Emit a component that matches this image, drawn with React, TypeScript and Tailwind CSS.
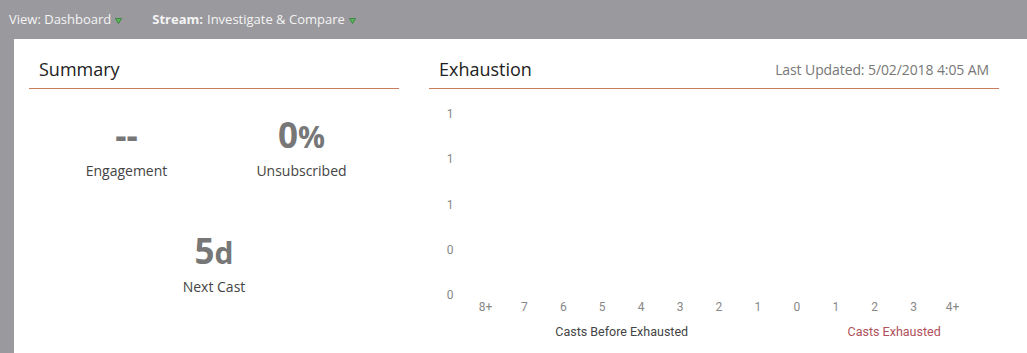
const xLabels = ["8+", "7", "6", "5", "4", "3", "2", "1", "0", "1", "2", "3", "4+"];
const yLabels = ["1", "1", "1", "0", "0"];

function Caret() {
  return (
    <svg width="7" height="6" viewBox="0 0 7 6" className="ml-[4px] mt-[2px]">
      <path d="M0.5 0.5 L6.5 0.5 L3.5 5.5 Z" fill="#5cb85c" stroke="#2f7d32" strokeWidth="0.8" />
    </svg>
  );
}

function Stat({ value, unit, label }: { value: string; unit?: string; label: string }) {
  return (
    <div className="flex flex-col items-center">
      <div className="h-[40px] leading-[40px] text-[35px] font-bold text-[#777777]">
        {value}
        {unit && <span className="text-[30px]">{unit}</span>}
      </div>
      <div className="mt-[6px] text-[14px] leading-5 text-[#444444]">{label}</div>
    </div>
  );
}

export default function App() {
  return (
    <div className="w-[1027px] h-[353px] overflow-hidden bg-[#9a999e] font-['Open_Sans',sans-serif]">
      {/* Top bar */}
      <div className="h-[39px] flex items-center pl-[9px] text-[13px] text-[#f4f4f4]">
        <div className="flex items-center">
          <span>View: Dashboard</span>
          <Caret />
        </div>
        <div className="flex items-center ml-[30px]">
          <span className="font-bold">Stream:</span>
          <span className="ml-[4px]">Investigate &amp; Compare</span>
          <Caret />
        </div>
      </div>

      {/* Content */}
      <div className="ml-[14px] h-[314px] bg-white pt-[12px] pl-[15px] flex gap-[30px]">
        {/* Summary */}
        <div className="w-[370px]">
          <div className="h-[38px] flex items-center px-[10px] border-b border-[#c97d5d]">
            <span className="text-[18px] text-[#222222]">Summary</span>
          </div>
          <div className="px-[10px] pt-[26px] grid grid-cols-2 gap-y-[50px]">
            <Stat value="--" label="Engagement" />
            <Stat value="0" unit="%" label="Unsubscribed" />
            <div className="col-span-2">
              <Stat value="5" unit="d" label="Next Cast" />
            </div>
          </div>
        </div>

        {/* Exhaustion */}
        <div className="w-[570px]">
          <div className="h-[38px] flex items-center justify-between px-[10px] border-b border-[#c97d5d]">
            <span className="text-[18px] text-[#222222]">Exhaustion</span>
            <span className="text-[14px] text-[#777777] tracking-[-0.1px]">Last Updated: 5/02/2018 4:05 AM</span>
          </div>
          <div className="pt-[17px] font-['Roboto',sans-serif]">
            <div className="flex">
              <div className="ml-[15px] w-[12px] h-[197px] flex flex-col justify-between items-center text-[12px] leading-4 text-[#888888]">
                {yLabels.map((l, i) => (
                  <span key={i}>{l}</span>
                ))}
              </div>
            </div>
            <div className="-mt-[4px] ml-[37px] w-[506px] grid grid-cols-[repeat(13,minmax(0,1fr))] text-[12px] leading-4 text-[#888888]">
              {xLabels.map((l, i) => (
                <span key={i} className="text-center">
                  {l}
                </span>
              ))}
            </div>
            <div className="mt-[9px] ml-[37px] w-[506px] grid grid-cols-[repeat(13,minmax(0,1fr))] text-[12.5px] leading-4">
              <span className="col-span-8 text-center text-[#444444]">Casts Before Exhausted</span>
              <span className="col-start-10 col-span-4 text-center text-[#b0505a]">Casts Exhausted</span>
            </div>
          </div>
        </div>
      </div>
    </div>
  );
}
